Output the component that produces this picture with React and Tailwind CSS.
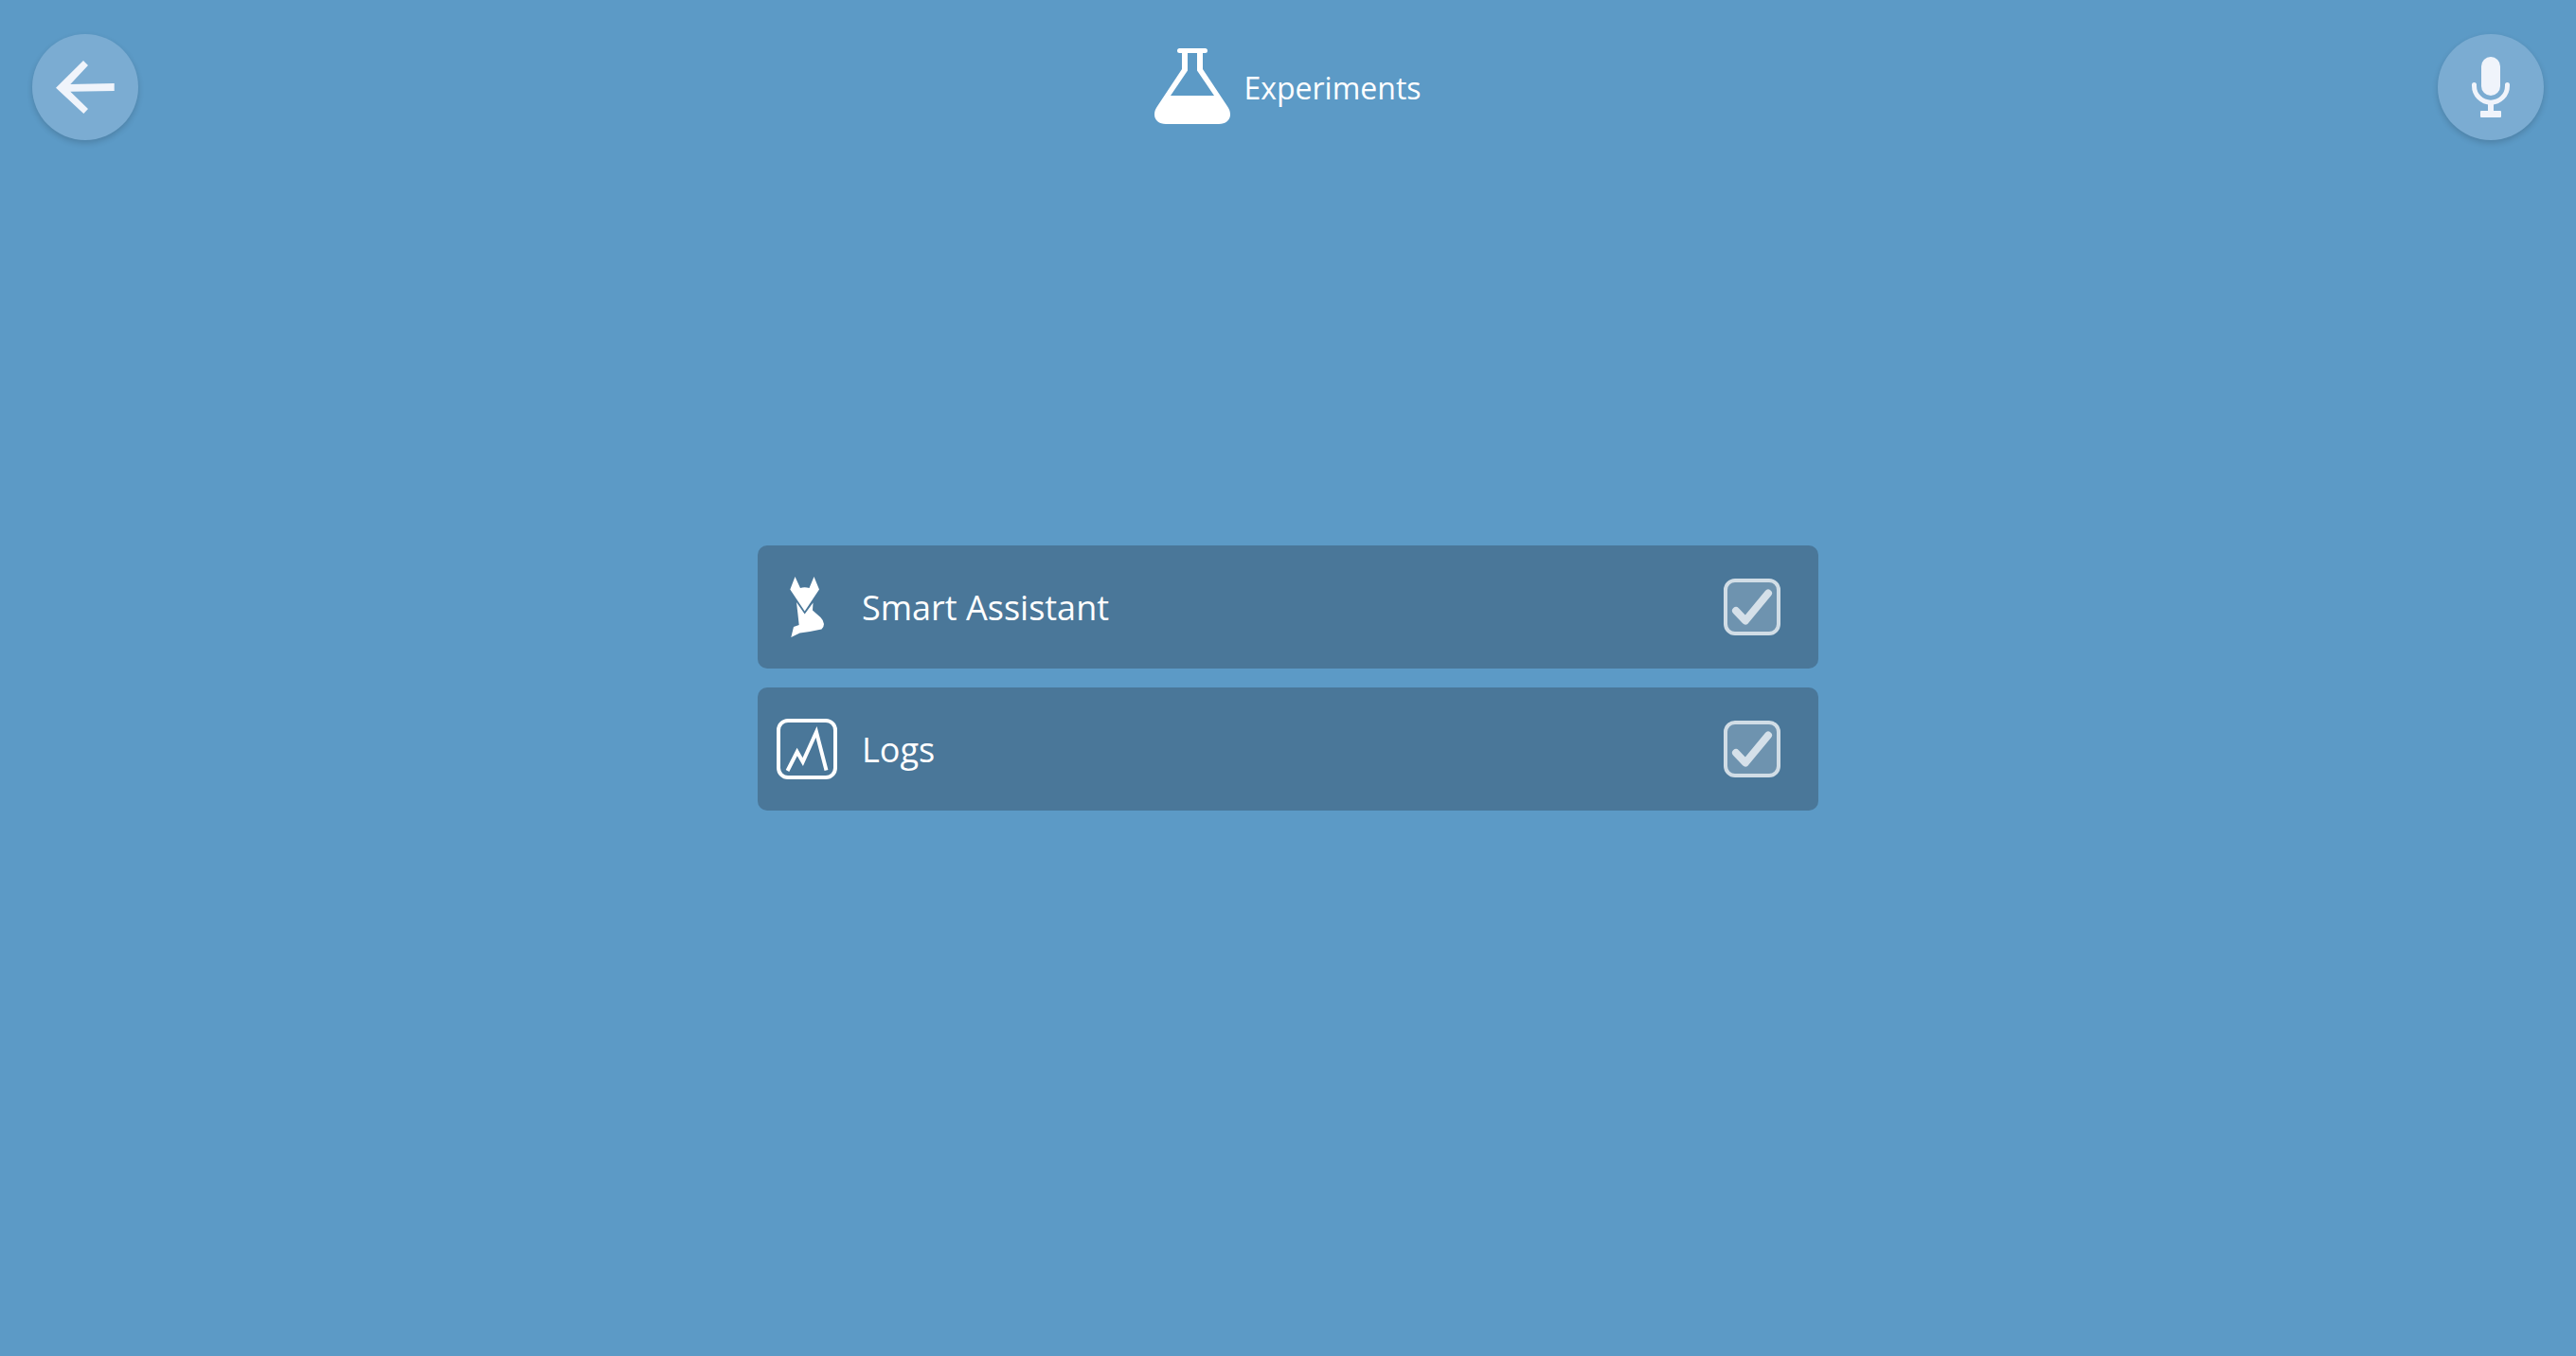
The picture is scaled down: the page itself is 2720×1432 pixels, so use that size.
import React from "react";

function RoundButton({ label, children }) {
  return (
    <button
      type="button"
      aria-label={label}
      className="size-28 shrink-0 rounded-full bg-[#7bacd2] text-[#f0f4fb] shadow-[0_3px_6px_rgba(0,0,0,0.16)]"
    >
      <svg viewBox="0 0 112 112" className="size-full" fill="currentColor" aria-hidden="true">
        {children}
      </svg>
    </button>
  );
}

function FlaskIcon() {
  return (
    <svg viewBox="0 0 80 80" className="size-20" fill="currentColor" aria-hidden="true">
      <path
        fillRule="evenodd"
        d="M26.500 0H53.500A2.500 2.500 0 0 1 53.500 5H51V22L77.500 62C79.200 64.600 80 67 80 70C80 76 75 80 68 80H12C5 80 0 76 0 70C0 67 0.800 64.600 2.500 62L29 22V5H26.500A2.500 2.500 0 0 1 26.500 0ZM35 5V23.500L17 50H63L45 23.500V5Z"
      />
    </svg>
  );
}

function FoxIcon() {
  return (
    <svg viewBox="0 0 64 64" className="size-16" fill="currentColor" aria-hidden="true">
      <path d="M19.500 0L25 12Q29.500 10.500 34.500 12L39.500 0L45 13.500L29.700 36.500L14.300 13.500Z" />
      <path d="M21 27L29.700 39.500L38.500 27.500L38 35.500L46.500 43Q49.500 46 50 50Q50 53 47.500 55.500L35 58L24.500 59.500L15.300 64L18 53L23.700 51L22.500 40Z" />
    </svg>
  );
}

function LogsIcon() {
  return (
    <svg viewBox="0 0 64 64" className="size-16" fill="none" stroke="currentColor" strokeWidth="4" aria-hidden="true">
      <rect x="2" y="2" width="60" height="60" rx="10" />
      <path d="M11.500 55L21.700 35L27.700 45.500L42 14L52.500 54.500" strokeMiterlimit="10" />
    </svg>
  );
}

function ExperimentRow({ id, label, icon }) {
  return (
    <li className="flex items-center rounded-[10px] bg-[#4a7799] py-[33px] pr-10 pl-5">
      {icon}
      <label htmlFor={id} className="ml-[26px] flex-1 pt-0.5 text-4xl">
        {label}
      </label>
      <span className="grid size-[60px]">
        <input
          id={id}
          type="checkbox"
          defaultChecked
          className="peer col-start-1 row-start-1 size-[60px] appearance-none rounded-xl border-4 border-[#d1dde6] bg-[#6e93af]"
        />
        <svg
          viewBox="0 0 60 60"
          className="pointer-events-none invisible col-start-1 row-start-1 size-[60px] peer-checked:visible"
          fill="none"
          stroke="#d5e0e9"
          strokeWidth="8"
          strokeLinecap="round"
          strokeLinejoin="round"
          aria-hidden="true"
        >
          <path d="M13 34L23 44.500L47 15.500" />
        </svg>
      </span>
    </li>
  );
}

export default function App() {
  return (
    <div className="grid min-h-screen grid-rows-[1fr_auto_1fr] bg-[#5c9ac6] font-['Open_Sans',sans-serif] text-white">
      <header className="flex items-start justify-between px-[34px] pt-9">
        <RoundButton label="Back">
          <path d="M25 56.700L54 28L59 33L40.300 53L86.700 52V60L40.300 60.700L59 79L54.300 84Z" />
        </RoundButton>
        <h1 className="flex h-28 items-center gap-3.5 pb-0.5 text-[32px]">
          <FlaskIcon />
          <span className="pt-1">Experiments</span>
        </h1>
        <RoundButton label="Voice input">
          <rect x="46" y="24" width="20" height="41" rx="10" />
          <path
            d="M38.500 53.500V54.700A17.500 17.500 0 0 0 73.500 54.700V53.500"
            fill="none"
            stroke="currentColor"
            strokeWidth="5"
            strokeLinecap="round"
          />
          <path d="M53 73H59V81H66Q67 81 67 82V87Q67 88 66 88H46Q45 88 45 87V82Q45 81 46 81H53Z" />
        </RoundButton>
      </header>
      <main className="mx-auto w-full max-w-[1120px]">
        <ul className="flex flex-col gap-5">
          <ExperimentRow id="smart-assistant" label="Smart Assistant" icon={<FoxIcon />} />
          <ExperimentRow id="logs" label="Logs" icon={<LogsIcon />} />
        </ul>
      </main>
    </div>
  );
}
